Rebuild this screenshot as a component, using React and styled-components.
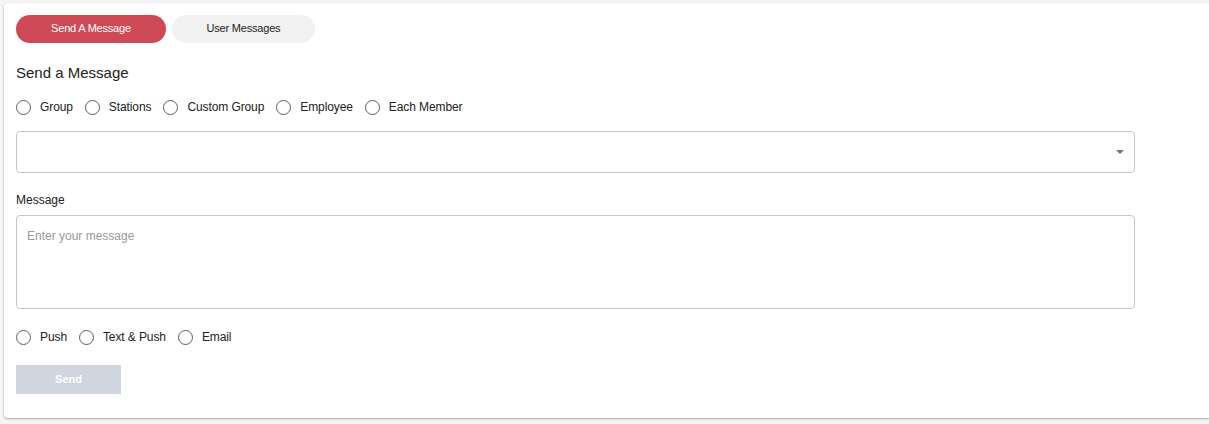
import React, { useState } from "react";
import styled, { createGlobalStyle } from "styled-components";

const Global = createGlobalStyle`
  html, body { margin: 0; padding: 0; background: #f4f4f4; }
  body { font-family: "Liberation Sans", Arial, sans-serif; color: #222; }
`;

const Page = styled.div`
  padding: 3px 0 0 4px;
  height: 424px;
  box-sizing: border-box;
`;

const Card = styled.div`
  background: #fff;
  border-radius: 4px 0 0 4px;
  box-shadow: 0 1px 2px rgba(0,0,0,0.3), 0 0 1px rgba(0,0,0,0.12);
  padding: 12px 12px 24px 12px;
  height: 415px;
  box-sizing: border-box;
`;

const Tabs = styled.div`
  display: flex;
  gap: 6px;
`;

const Tab = styled.button`
  height: 28px;
  width: ${p => p.$w}px;
  border: none;
  border-radius: 14px;
  background: ${p => (p.$active ? "#cf4a57" : "#f2f2f2")};
  color: ${p => (p.$active ? "#fff" : "#222")};
  font-family: "Liberation Sans", Arial, sans-serif;
  font-size: 11px;
  line-height: 12px;
  letter-spacing: -0.2px;
  padding: 0 0 2px 0;
  cursor: pointer;
`;

const Title = styled.h2`
  margin: 21px 0 0 0;
  font-size: 15px;
  font-weight: 400;
  line-height: 18px;
  color: #222;
`;

const RadioRow = styled.div`
  display: flex;
  align-items: center;
  gap: 12px;
  margin-top: ${p => p.$mt}px;
  height: 18px;
`;

const RadioLabel = styled.label`
  display: flex;
  align-items: center;
  gap: 9px;
  font-size: 12px;
  letter-spacing: -0.1px;
  color: #222;
  cursor: pointer;
`;

const Circle = styled.span`
  width: 15px;
  height: 15px;
  box-sizing: border-box;
  border-radius: 50%;
  border: 1.6px solid #5f5f5f;
  display: flex;
  align-items: center;
  justify-content: center;
  &::after {
    content: "";
    width: 7px;
    height: 7px;
    border-radius: 50%;
    background: ${p => (p.$on ? "#cf4a57" : "transparent")};
  }
`;

const Select = styled.div`
  margin-top: 15px;
  width: 1119px;
  height: 42px;
  box-sizing: border-box;
  border: 1px solid #c6c6c6;
  border-radius: 4px;
  display: flex;
  align-items: center;
  justify-content: flex-end;
  padding-right: 10px;
`;

const FieldLabel = styled.div`
  margin-top: 20px;
  font-size: 12px;
  line-height: 14px;
  color: #222;
`;

const TextArea = styled.textarea`
  display: block;
  margin-top: 8px;
  width: 1119px;
  height: 94px;
  box-sizing: border-box;
  border: 1px solid #c6c6c6;
  border-radius: 4px;
  padding: 13px 10px;
  resize: none;
  font-family: "Liberation Sans", Arial, sans-serif;
  font-size: 12px;
  outline: none;
  &::placeholder { color: #9a9a9a; }
`;

const SendButton = styled.button`
  margin-top: 19px;
  width: 105px;
  height: 29px;
  border: none;
  background: #d1d5de;
  color: #fff;
  font-family: "Liberation Sans", Arial, sans-serif;
  font-size: 11px;
  line-height: 12px;
  font-weight: 700;
  padding: 0 0 2px 0;
`;

function Radio({ label, on, onClick }) {
  return (
    <RadioLabel onClick={onClick}>
      <Circle $on={on} />
      {label}
    </RadioLabel>
  );
}

export default function App() {
  const [tab, setTab] = useState(0);
  const [target, setTarget] = useState(null);
  const [channel, setChannel] = useState(null);
  const targets = ["Group", "Stations", "Custom Group", "Employee", "Each Member"];
  const channels = ["Push", "Text & Push", "Email"];
  return (
    <Page>
      <Global />
      <Card>
        <Tabs>
          <Tab $w={150} $active={tab === 0} onClick={() => setTab(0)}>Send A Message</Tab>
          <Tab $w={143} $active={tab === 1} onClick={() => setTab(1)}>User Messages</Tab>
        </Tabs>
        <Title>Send a Message</Title>
        <RadioRow $mt={16}>
          {targets.map(t => (
            <Radio key={t} label={t} on={target === t} onClick={() => setTarget(t)} />
          ))}
        </RadioRow>
        <Select>
          <svg width="8" height="4" viewBox="0 0 8 4">
            <path d="M0 0 L8 0 L4 4 Z" fill="#757575" />
          </svg>
        </Select>
        <FieldLabel>Message</FieldLabel>
        <TextArea placeholder="Enter your message" />
        <RadioRow $mt={19}>
          {channels.map(c => (
            <Radio key={c} label={c} on={channel === c} onClick={() => setChannel(c)} />
          ))}
        </RadioRow>
        <SendButton disabled>Send</SendButton>
      </Card>
    </Page>
  );
}
